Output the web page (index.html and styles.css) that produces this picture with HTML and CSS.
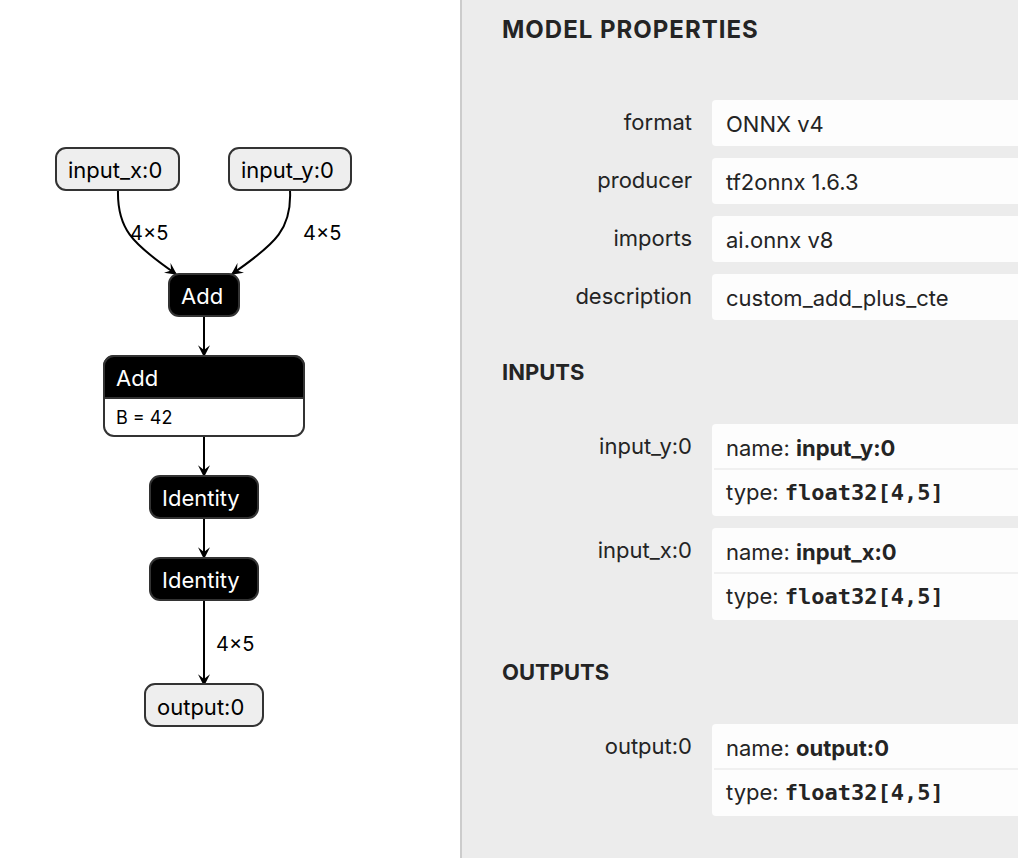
FILE: index.html
```html
<!DOCTYPE html>
<html lang="en">
<head>
<meta charset="utf-8">
<title>Model Properties</title>
<link rel="stylesheet" href="styles.css">
</head>
<body>
<div class="app">
  <main class="graph">
    <svg class="canvas" width="460" height="858" viewBox="0 0 460 858" role="img" aria-label="Model graph">
      <defs>
        <marker id="arrow" viewBox="0 0 10 10" refX="9" refY="5" markerUnits="userSpaceOnUse" markerWidth="12" markerHeight="12" orient="auto">
          <path d="M0 0 L10 5 L0 10 L4 5 Z"/>
        </marker>
      </defs>
      <g class="edges">
        <path d="M118 190 C117 228 131 243 176 274"/>
        <path d="M290 190 C292 228 277 243 232 274"/>
        <path d="M204 316 V356"/>
        <path d="M204 436 V476"/>
        <path d="M204 518 V558"/>
        <path d="M204 600 V685"/>
      </g>
      <g class="edge-labels">
        <text x="130" y="240">4×5</text>
        <text x="303" y="240">4×5</text>
        <text x="216" y="651">4×5</text>
      </g>
      <g class="node node-io">
        <rect x="56" y="148" width="123" height="42" rx="10"/>
        <text x="68" y="178">input_x:0</text>
      </g>
      <g class="node node-io">
        <rect x="229" y="148" width="122" height="42" rx="10"/>
        <text x="241" y="178">input_y:0</text>
      </g>
      <g class="node node-op">
        <rect x="169" y="274" width="70" height="42" rx="10"/>
        <text x="181" y="304">Add</text>
      </g>
      <g class="node node-op">
        <rect class="node-body" x="104" y="356" width="200" height="80" rx="10"/>
        <path class="node-head" d="M104 398 V366 A10 10 0 0 1 114 356 H294 A10 10 0 0 1 304 366 V398 Z"/>
        <text x="116" y="386">Add</text>
        <text class="attribute" x="116" y="424">B = 42</text>
      </g>
      <g class="node node-op">
        <rect x="150" y="476" width="108" height="42" rx="10"/>
        <text x="162" y="506">Identity</text>
      </g>
      <g class="node node-op">
        <rect x="150" y="558" width="108" height="42" rx="10"/>
        <text x="162" y="588">Identity</text>
      </g>
      <g class="node node-io">
        <rect x="145" y="684" width="118" height="42" rx="10"/>
        <text x="157" y="715">output:0</text>
      </g>
    </svg>
  </main>
  <aside class="sidebar">
    <h1 class="title">MODEL PROPERTIES</h1>
    <dl class="properties">
      <dt>format</dt><dd><div class="line">ONNX v4</div></dd>
      <dt>producer</dt><dd><div class="line">tf2onnx 1.6.3</div></dd>
      <dt>imports</dt><dd><div class="line">ai.onnx v8</div></dd>
      <dt>description</dt><dd><div class="line">custom_add_plus_cte</div></dd>
    </dl>
    <h2 class="section">INPUTS</h2>
    <dl class="properties">
      <dt>input_y:0</dt>
      <dd><div class="line">name: <b>input_y:0</b></div><div class="line">type: <code>float32[4,5]</code></div></dd>
      <dt>input_x:0</dt>
      <dd><div class="line">name: <b>input_x:0</b></div><div class="line">type: <code>float32[4,5]</code></div></dd>
    </dl>
    <h2 class="section">OUTPUTS</h2>
    <dl class="properties">
      <dt>output:0</dt>
      <dd><div class="line">name: <b>output:0</b></div><div class="line">type: <code>float32[4,5]</code></div></dd>
    </dl>
  </aside>
</div>
</body>
</html>
```
FILE: styles.css
```css
* {
  box-sizing: border-box;
}

body {
  margin: 0;
  background: #fff;
  color: #242424;
  font-family: Inter, "Liberation Sans", sans-serif;
  font-size: 22px;
}

.app {
  display: flex;
  min-height: 100vh;
}

.graph {
  flex: none;
}

.canvas {
  display: block;
}

.edges path {
  fill: none;
  stroke: #000;
  stroke-width: 2px;
  marker-end: url(#arrow);
}

.node .attribute {
  fill: #000;
  font-size: 18px;
}

.edge-labels text {
  fill: #000;
  font-size: 20px;
}

.node rect,
.node .node-head {
  stroke: #333;
  stroke-width: 2px;
}

.node-io rect {
  fill: #eee;
}

.node-io text {
  fill: #000;
}

.node-op rect,
.node-op .node-head {
  fill: #000;
}

.node-op .node-body {
  fill: #fff;
}

.node-op text {
  fill: #fff;
}

.sidebar {
  flex: 1;
  min-width: 0;
  padding: 14px 0 42px 40px;
  border-left: 2px solid #ccc;
  background: #ececec;
}

.title,
.section {
  margin: 0;
  font-weight: 700;
  line-height: 32px;
}

.title {
  margin-bottom: 54px;
  font-size: 24px;
  letter-spacing: 1px;
}

.section {
  margin: 36px 0;
  font-size: 22px;
}

.properties {
  display: grid;
  grid-template-columns: 190px 1fr;
  gap: 12px 20px;
  margin: 0;
}

.properties dt {
  line-height: 44px;
  text-align: right;
}

.properties dd {
  margin: 0;
  padding: 4px 0 2px 2px;
  border-radius: 4px 0 0 4px;
  background: #fdfdfd;
}

.line {
  padding-left: 12px;
  line-height: 40px;
  white-space: nowrap;
}

.line + .line {
  border-top: 2px solid #f0f0f0;
  line-height: 44px;
}

.line b {
  font-weight: 700;
}

.line code {
  font: bold 22px/40px "DejaVu Sans Mono", monospace;
}
```
